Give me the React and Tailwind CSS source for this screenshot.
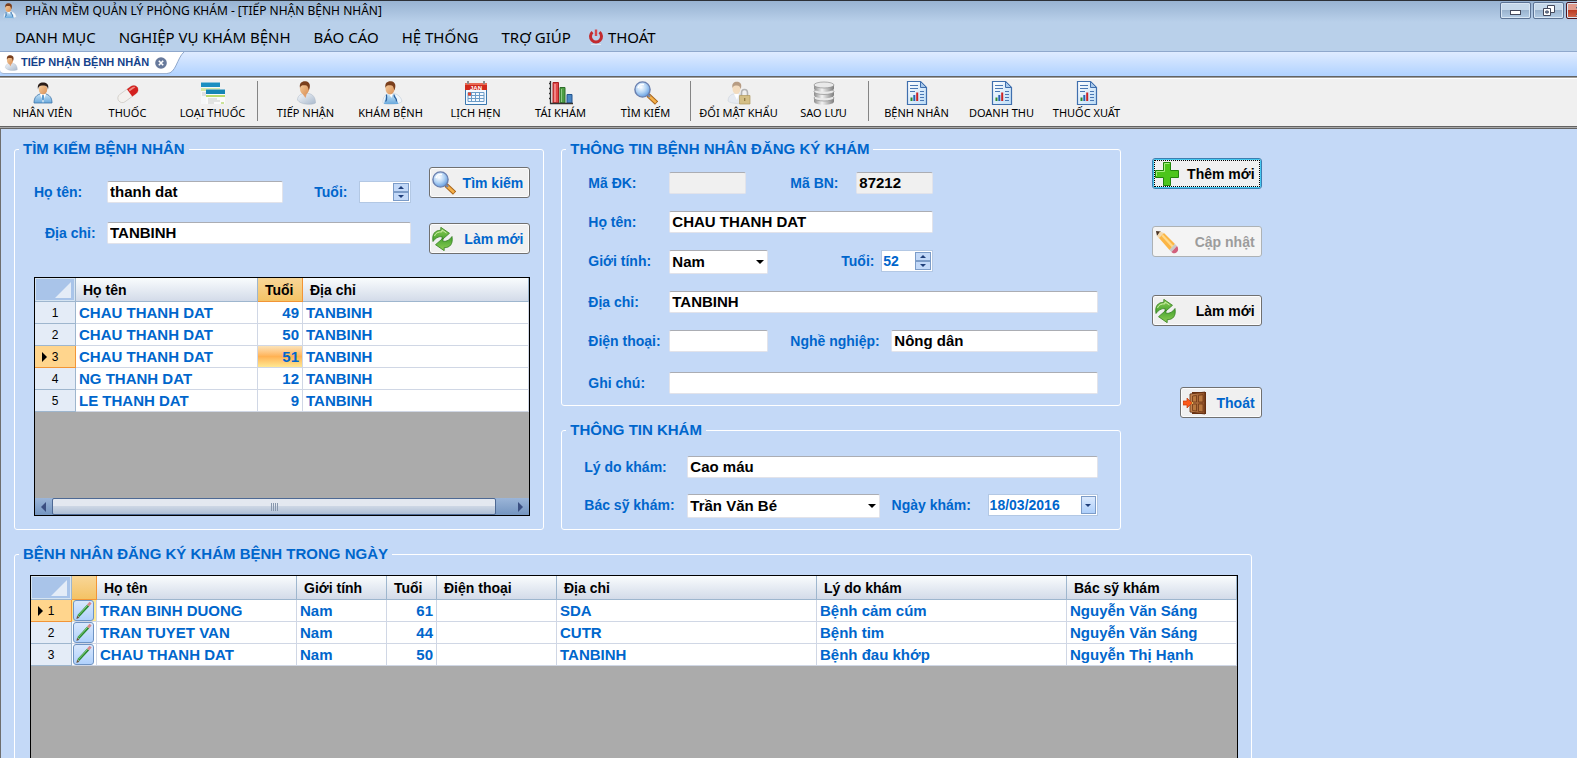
import React, { useState } from 'react'

const SEARCH_ROWS = [
    { name: 'CHAU THANH DAT', age: 49, address: 'TANBINH' },
    { name: 'CHAU THANH DAT', age: 50, address: 'TANBINH' },
    { name: 'CHAU THANH DAT', age: 51, address: 'TANBINH' },
    { name: 'NG THANH DAT', age: 12, address: 'TANBINH' },
    { name: 'LE THANH DAT', age: 9, address: 'TANBINH' },
]

const TODAY_ROWS = [
    { name: 'TRAN BINH DUONG', sex: 'Nam', age: 61, phone: '', address: 'SDA', reason: 'Bệnh cảm cúm', doctor: 'Nguyễn Văn Sáng' },
    { name: 'TRAN TUYET VAN', sex: 'Nam', age: 44, phone: '', address: 'CUTR', reason: 'Bệnh tim', doctor: 'Nguyễn Văn Sáng' },
    { name: 'CHAU THANH DAT', sex: 'Nam', age: 50, phone: '', address: 'TANBINH', reason: 'Bệnh đau khớp', doctor: 'Nguyễn Thị Hạnh' },
]

/* ---------- icons ---------- */

function Gradients() {
    return (
        <svg className="absolute w-0 h-0" aria-hidden="true">
            <defs>
                <linearGradient id="skin" x1="0" y1="0" x2="1" y2="1">
                    <stop offset="0" stopColor="#f6cfa0" /><stop offset="1" stopColor="#d98f55" />
                </linearGradient>
                <linearGradient id="coat" x1="0" y1="0" x2="1" y2="1">
                    <stop offset="0" stopColor="#f4f7fb" /><stop offset="1" stopColor="#a9b9cc" />
                </linearGradient>
                <linearGradient id="scrub" x1="0" y1="0" x2="0" y2="1">
                    <stop offset="0" stopColor="#c4e2f7" /><stop offset="1" stopColor="#6aa9dc" />
                </linearGradient>
                <radialGradient id="lens" cx="0.4" cy="0.35" r="0.7">
                    <stop offset="0" stopColor="#ffffff" /><stop offset="0.5" stopColor="#b5d5f5" /><stop offset="1" stopColor="#5b97dd" />
                </radialGradient>
                <linearGradient id="disk" x1="0" y1="0" x2="1" y2="0">
                    <stop offset="0" stopColor="#8c8c8c" /><stop offset="0.4" stopColor="#f2f2f2" /><stop offset="1" stopColor="#7d7d7d" />
                </linearGradient>
                <linearGradient id="leaf" x1="0" y1="0" x2="0" y2="1">
                    <stop offset="0" stopColor="#8fce55" /><stop offset="1" stopColor="#3f9f2c" />
                </linearGradient>
                <linearGradient id="wood" x1="0" y1="0" x2="1" y2="0">
                    <stop offset="0" stopColor="#c98a55" /><stop offset="1" stopColor="#8a4a22" />
                </linearGradient>
                <linearGradient id="page" x1="0" y1="0" x2="1" y2="1">
                    <stop offset="0" stopColor="#ffffff" /><stop offset="1" stopColor="#bcdcf6" />
                </linearGradient>
            </defs>
        </svg>
    )
}

function StaffIcon() {
    return (
        <svg viewBox="0 0 24 24" className="size-6">
            <path d="M3 22c0-6 3-8 6-9h6c3 1 6 3 6 9z" fill="url(#scrub)" stroke="#3c74a8" strokeWidth=".8" />
            <path d="M9 13h6l-3 9z" fill="#fff" />
            <path d="M11.200 14h1.600l.6 4-1.400 2-1.400-2z" fill="#5d9bcf" />
            <ellipse cx="12" cy="8.500" rx="4.200" ry="5" fill="url(#skin)" />
            <path d="M7 8.500C6 3 9 1.500 12 1.500S18.500 3 17 8.500c-.5-3-1.500-4-5-4s-4.500 1-5 4z" fill="#2a1d18" />
        </svg>
    )
}

function PatientIcon({ className = 'size-6' }) {
    return (
        <svg viewBox="0 0 24 24" className={className}>
            <path d="M3.500 19c0-4 3-6 6-6.500h5c4 .5 7 3.500 7 9.500-3 2-15 2-18-3z" fill="url(#coat)" stroke="#a8b4c4" strokeWidth=".5" />
            <path d="M8 12h5l-1.500 5z" fill="#e0a070" />
            <ellipse cx="10.500" cy="7.500" rx="4.600" ry="6" fill="url(#skin)" />
            <path d="M6 7C5 2 8 0 11.500.3 16 .8 17 5 14.800 9.500c-.6-2.500-.8-4-2.300-5C10 4.500 7 3.500 6 7z" fill="#7a3f1d" />
        </svg>
    )
}

function DoctorIcon({ className = 'size-6' }) {
    return (
        <svg viewBox="0 0 24 24" className={className}>
            <path d="M4 22c-.5-5 2-8.500 6-9.500h4c5 .5 8 3.500 9 8-3 3-15 4-19 1.500z" fill="#f2f6fa" stroke="#b5c3d2" strokeWidth=".5" />
            <path d="M7 13.500h9l3.500 9.500H5z" fill="url(#scrub)" />
            <path d="M7.500 13.500c0 4 1 5-1 7M15 13.500c0 4 3 3 2.500 7" fill="none" stroke="#2a5f9c" strokeWidth="1.200" />
            <path d="M10 13h3.500l-1 4z" fill="#fff" />
            <ellipse cx="11" cy="7.500" rx="4.500" ry="6" fill="url(#skin)" />
            <path d="M6.500 7C5.500 2 8.500 0 12 .3c4.500.5 5.500 4.700 3.300 9.200-.6-2.500-.8-4-2.300-5C10.500 4.500 7.500 3.500 6.500 7z" fill="#7a3f1d" />
        </svg>
    )
}

function PillIcon() {
    return (
        <svg viewBox="0 0 24 24" className="size-6">
            <g transform="rotate(-36 12 13)">
                <rect x="0.500" y="8.500" width="23" height="9" rx="4.500" fill="#f3f1ee" stroke="#c5c1bb" strokeWidth=".6" />
                <path d="M14 8.500h5a4.500 4.500 0 0 1 0 9h-5z" fill="#d3201f" />
                <path d="M15 10h4c1.500 0 2.500.8 3 1.800h-7z" fill="#f08a80" />
            </g>
        </svg>
    )
}

function DrugTypeIcon() {
    return (
        <svg viewBox="0 0 24 24" className="size-6">
            <path d="M0 1h19v22H0z" fill="#f5f7f8" />
            <path d="M0 1.500h19V6H0z" fill="#1b8fc1" />
            <path d="M0 7h19v3H0z" fill="#d6e8a6" />
            <path d="M1 12h4M1 14h4" stroke="#c8c8c8" />
            <path d="M5 8.500h19V23H5z" fill="#fafafa" />
            <path d="M5 8.500h19V13H5z" fill="#1585b5" />
            <path d="M5 14h19v2H5z" fill="#b9da6d" />
            <path d="M7 18h9M7 20h12M7 22h6" stroke="#c9ccc9" />
            <path d="M20 22h3" stroke="#9ccc3c" />
        </svg>
    )
}

function CalendarIcon() {
    return (
        <svg viewBox="0 0 24 24" className="size-6">
            <path d="M1.500 5.500h21v18h-21z" fill="#f4f9ff" stroke="#3976ad" />
            <path d="M1 2h22v7H1z" fill="#d02a1c" />
            <path d="M1 2h22v2H1z" fill="#e86a55" />
            <path d="M4 0v3M20 0v3" stroke="#8c8c8c" strokeWidth="2" />
            <text x="12" y="8.500" textAnchor="middle" fontSize="6" fontWeight="bold" fontFamily="Liberation Sans" fill="#fff">JAN</text>
            <path d="M4 11.500h16v9H4zM4 14.500h16M4 17.500h16M7.500 11.500v9M11.500 11.500v9M15.500 11.500v9" fill="none" stroke="#6d9dc8" />
            <path d="M4 11.500h3v3H4z" fill="#e8452c" />
        </svg>
    )
}

function ChartIcon() {
    return (
        <svg viewBox="0 0 24 24" className="size-6">
            <path d="M4 1.500h5.500V22H4z" fill="#e04848" stroke="#a82020" />
            <path d="M6 3v18" stroke="#f79a9a" strokeWidth="1.500" />
            <path d="M11 6.500h5V22h-5z" fill="#4f9e45" stroke="#2c6e28" />
            <path d="M12.500 8v13" stroke="#90cc88" />
            <path d="M18 13.500h5V22h-5z" fill="#4a86c4" stroke="#22558f" />
            <path d="M1.500 0v22.500H24M0 2.500h2M0 7.500h2M0 12.500h2M0 17.500h2" fill="none" stroke="#333" strokeWidth="1.300" />
        </svg>
    )
}

function SearchIcon() {
    return (
        <svg viewBox="0 0 24 24" className="size-6 shrink-0">
            <path d="m14 14 8.500 8" stroke="#a8641a" strokeWidth="4.500" />
            <path d="m15 15 7 6.500" stroke="#f5b14a" strokeWidth="2.500" />
            <path d="m13 13 3 2.800" stroke="#7b87a0" strokeWidth="2.500" />
            <circle cx="8.500" cy="8.500" r="7.600" fill="url(#lens)" stroke="#6a7fae" strokeWidth="1.400" />
            <path d="M4 7c.5-2.500 3-4 6-3.500" fill="none" stroke="#fff" strokeWidth="1.500" />
        </svg>
    )
}

function PasswordIcon() {
    return (
        <svg viewBox="0 0 24 24" className="size-6">
            <path d="M1 20c0-4 2-6 5-7h6c4 1 6 4 6 8-3 2-14 2-17-1z" fill="#e6eaf1" stroke="#c5ccd6" strokeWidth=".5" />
            <path d="M7 13h5l-2 6z" fill="#fff" />
            <ellipse cx="9.500" cy="7.500" rx="4" ry="5.500" fill="#f3dcbf" />
            <path d="M5.500 7C4.500 2.500 7 .8 10 .8s5.500 2 3.700 7.200C13 5.500 12 4.500 10 4.500S6.500 4.500 5.500 7z" fill="#b79c83" />
            <path d="M14.500 15v-3a3 3.500 0 0 1 6 0v3" fill="none" stroke="#b3b3b3" strokeWidth="1.600" />
            <path d="M12.500 14.500h10.500v8.500H12.500z" fill="#d4bf86" stroke="#b09a60" strokeWidth=".7" />
            <path d="M17.700 17v3" stroke="#8f7a45" strokeWidth="1.300" />
        </svg>
    )
}

function DatabaseIcon() {
    return (
        <svg viewBox="0 0 24 24" className="size-6">
            {[16, 9.500, 3].map(y => (
                <g key={y}>
                    <path d={`M2 ${y + 1}v3.500c0 2 4 3.200 10 3.200s10-1.200 10-3.200V${y + 1}z`} fill="url(#disk)" />
                    <ellipse cx="12" cy={y + 1} rx="10" ry="3" fill="#e9e9e9" stroke="#8e8e8e" strokeWidth=".7" />
                </g>
            ))}
        </svg>
    )
}

function ReportIcon() {
    return (
        <svg viewBox="0 0 24 24" className="size-6">
            <path d="M2.500.5h13l6 6v17h-19z" fill="url(#page)" stroke="#3f6fae" strokeWidth="1.200" />
            <path d="M15.500.5v6h6z" fill="#a9c9ea" stroke="#3f6fae" />
            <path d="M5 4.500h8M5 7.500h8M5 10.500h5M15 10.500h4M15 13.500h4M15 16.500h4M15 19.500h4" stroke="#4a78b4" />
            <path d="M6.500 16.500V20" stroke="#2f8a2f" strokeWidth="2" />
            <path d="M9.300 14v6" stroke="#2a62b4" strokeWidth="2" />
            <path d="M12.200 11.500V20" stroke="#cc2424" strokeWidth="2" />
        </svg>
    )
}

function RefreshIcon() {
    const arrow = 'M1 14.500C-.3 7 3 3.300 8.800 3.300V.3L17.500 6.300 10 12.800V9.600C6 9.400 3.500 11 1 14.500z'
    return (
        <svg viewBox="0 0 24 24" className="size-6 shrink-0">
            <g fill="url(#leaf)" stroke="#357f22" strokeWidth=".8" strokeLinejoin="round">
                <path d={arrow} />
                <path d={arrow} transform="rotate(180 10.500 12)" />
            </g>
            <path d="M2.500 9C3.500 6 6 4.800 10 4.800V3l4.500 3" fill="none" stroke="#cdecaa" />
        </svg>
    )
}

function PlusIcon() {
    return (
        <svg viewBox="0 0 24 24" className="size-6">
            <path d="M8.500.5h7v8h8v7h-8v8h-7v-8h-8v-7h8z" fill="#4cc51b" stroke="#20860b" />
            <path d="M9.500 9.500v-8h5M1.500 14V9.500h8" fill="none" stroke="#a6ee80" />
        </svg>
    )
}

function PencilIcon() {
    return (
        <svg viewBox="0 0 24 24" className="size-6">
            <path d="M1 1l5 .5L2 6z" fill="#4a3526" />
            <path d="M5 1.500 2 6l2 2.500L9 3z" fill="#f3d9ae" />
            <path d="M9 3 4 8l10.500 12L20 14z" fill="#fbb545" />
            <path d="M8 4.500 6.500 6 17 17.500l1.500-1.800z" fill="#ffd98a" />
            <path d="m20 14-5.500 6 2 2L22 16z" fill="#c9c9c9" />
            <path d="M22 16l-5.500 6c1.500 2 4 1.500 5.500 0s1.500-4 0-6z" fill="#d2607c" />
        </svg>
    )
}

function DoorIcon() {
    return (
        <svg viewBox="0 0 24 24" className="size-6">
            <path d="M9 1h14v22H9z" fill="#6b3212" />
            <path d="M7 3l15-2v22L7 21z" fill="url(#wood)" stroke="#5b2b10" strokeWidth=".8" />
            <path d="M9.500 5l4-.5v6.500h-4zM15.500 4.300l4.500-.6V11h-4.500zM9.500 13h4v7l-4-.5zM15.500 13H20v8l-4.500-.6z" fill="#b9783f" stroke="#6e3816" strokeWidth=".8" />
            <circle cx="9" cy="12" r="1" fill="#f3d35a" />
            <path d="M0 10h4V7l5 5-5 5v-3H0z" fill="#fb5a1c" stroke="#c43a08" strokeWidth=".7" />
        </svg>
    )
}

function PowerIcon() {
    return (
        <svg viewBox="0 0 16 16" className="size-4">
            <path d="M4.500 3.200a5.500 5.500 0 1 0 7 0" fill="none" stroke="#c22a2e" strokeWidth="3" />
            <path d="M8 .5v6.500" stroke="#d4484c" strokeWidth="2.400" />
            <path d="M3 15.500h10" stroke="#dfe8f2" />
        </svg>
    )
}

function PenIcon() {
    return (
        <svg viewBox="0 0 20 20" className="size-5">
            <path d="M4.500 15.500 15 4" stroke="#2a8a30" strokeWidth="2.800" />
            <path d="m4.500 14.800 10-11" stroke="#8cd486" />
            <path d="m14.800 4.200 2.700-3" stroke="#d98a8a" strokeWidth="2.800" />
            <path d="M2.500 18.500l.8-3.600 2.400 2.200z" fill="#6b5636" />
        </svg>
    )
}

function Triangle({ dir = 'down', className = '' }) {
    const points = { down: '0,0 8,0 4,4', up: '0,4 8,4 4,0', left: '4,0 4,8 0,4', right: '0,0 0,8 4,4' }
    const box = dir === 'down' || dir === 'up' ? '0 0 8 4' : '0 0 4 8'
    return (
        <svg viewBox={box} className={className} aria-hidden="true">
            <polygon points={points[dir]} fill="currentColor" />
        </svg>
    )
}

/* ---------- form controls ---------- */

function Group({ title, className = '', bodyClass = '', children }) {
    return (
        <fieldset className={`flex min-w-0 flex-col border border-white rounded-[3px] px-1 ${className}`}>
            <legend className="px-1 text-[15px] leading-[18px] font-bold text-[#0066cc]">{title}</legend>
            <div className={`flex flex-1 flex-col ${bodyClass}`}>{children}</div>
        </fieldset>
    )
}

function Label({ className = '', ...props }) {
    return <label {...props} className={`shrink-0 whitespace-nowrap text-sm leading-[22px] font-bold text-[#0066cc] ${className}`} />
}

function TextInput({ className = '', ...props }) {
    return (
        <input
            type="text"
            {...props}
            className={`h-[22px] min-w-0 rounded-[2px] border border-[#e2e3ea] border-t-[#abadb3] px-0.5 text-[15px] font-bold text-black focus:outline-none ${className}`}
        />
    )
}

function Select({ id, options, className = '' }) {
    return (
        <div className={`relative ${className}`}>
            <select id={id} className="block w-full h-6 appearance-none rounded-[2px] border border-[#e2e3ea] border-t-[#abadb3] bg-white pl-0.5 pr-5 text-[15px] leading-5 font-bold text-black focus:outline-none">
                {options.map(o => <option key={o}>{o}</option>)}
            </select>
            <Triangle className="pointer-events-none absolute right-1 top-2.5 w-2 h-1 text-black" />
        </div>
    )
}

function Spinner({ id, initial = '' }) {
    const [value, setValue] = useState(initial)
    const step = n => setValue(v => String(Math.max(0, Number(v) + n)))
    return (
        <div className="flex w-[52px] h-[22px] shrink-0 border border-[#b3c8e4] bg-white p-px">
            <input id={id} value={value} onChange={e => setValue(e.target.value)} className="w-0 flex-1 text-sm leading-4 font-bold text-[#0066cc] focus:outline-none" />
            <div className="flex w-4 flex-col">
                <button type="button" aria-label="Tăng" onClick={() => step(1)} className="flex flex-1 items-center justify-center border border-[#7c9cc8] bg-[#c3d9f8] text-[#1f3f7a]">
                    <Triangle dir="up" className="w-1.5 h-[3px]" />
                </button>
                <button type="button" aria-label="Giảm" onClick={() => step(-1)} className="flex flex-1 items-center justify-center border border-[#7c9cc8] bg-[#c3d9f8] text-[#1f3f7a]">
                    <Triangle className="w-1.5 h-[3px]" />
                </button>
            </div>
        </div>
    )
}

function PushButton({ icon: Icon, label, disabled, focused, className = '' }) {
    const frame = disabled
        ? 'border-[#adb2b5] bg-[#f4f4f4] text-[#9c9c9c]'
        : focused
            ? 'border-[#3c7fb1] bg-[#f0f0f0] shadow-[inset_0_0_0_1px_#45c8f0]'
            : 'border-[#707070] bg-[#f0f0f0] shadow-[inset_0_0_0_1px_#fcfcfc]'
    return (
        <button type="button" disabled={disabled} className={`h-[31px] rounded-[3px] border p-px text-sm font-bold ${frame} ${className}`}>
            <span className={`flex h-full items-center justify-between border pr-1 ${focused ? 'border-dotted border-black' : 'border-transparent'}`}>
                <Icon />
                <span className="whitespace-nowrap">{label}</span>
            </span>
        </button>
    )
}

/* ---------- data grids ---------- */

function HeadCell({ active, className = '', children }) {
    const look = active
        ? 'border-[#f29536] bg-linear-to-b from-[#f8d697] to-[#f4c364]'
        : 'border-[#9eb6ce] bg-linear-to-b from-[#f9fcfd] to-[#d3dbe9]'
    return <th className={`h-6 border-r border-b px-[7px] text-left text-sm font-bold text-black whitespace-nowrap ${look} ${className}`}>{children}</th>
}

function Corner() {
    return (
        <th aria-label="Chọn tất cả" className="h-6 border-r border-b border-[#9eb6ce] bg-[#a9c4e9] p-0 shadow-[inset_0_0_0_1px_#d5e4f2]">
            <svg viewBox="0 0 16 16" className="ml-auto mr-1 size-4"><path d="M16 0v16H0z" fill="#e4ecf7" /></svg>
        </th>
    )
}

function RowHead({ number, current }) {
    return (
        <th className={`h-[22px] border-r border-b p-0 font-normal text-xs text-black ${current ? 'border-[#f29536] bg-[#ffd58d]' : 'border-[#9eb6ce] bg-[#e4ecf7]'}`}>
            <span className="flex items-center">
                <span className="flex w-4 justify-end">{current && <Triangle dir="right" className="w-[5px] h-2.5 mr-1" />}</span>
                <span className="w-2 text-center">{number}</span>
            </span>
        </th>
    )
}

function Cell({ className = 'bg-white', children }) {
    return <td className={`h-[22px] border-r border-b border-[#d0d7e5] px-[3px] py-0 leading-5 whitespace-nowrap ${className}`}>{children}</td>
}

function SearchGrid() {
    return (
        <div className="flex flex-1 flex-col mt-[23px] border border-black bg-[#ababab]">
            <table className="w-full table-fixed border-separate border-spacing-0 text-[15px] font-bold text-[#0066cc]">
                <colgroup>
                    <col className="w-[41px]" /><col className="w-[182px]" /><col className="w-[45px]" /><col />
                </colgroup>
                <thead>
                    <tr>
                        <Corner />
                        <HeadCell>Họ tên</HeadCell>
                        <HeadCell active>Tuổi</HeadCell>
                        <HeadCell>Địa chỉ</HeadCell>
                    </tr>
                </thead>
                <tbody>
                    {SEARCH_ROWS.map((row, i) => (
                        <tr key={i}>
                            <RowHead number={i + 1} current={i === 2} />
                            <Cell>{row.name}</Cell>
                            <Cell className={i === 2 ? 'text-right bg-linear-to-b from-[#fbe3b8] via-[#ffb253] to-[#ffe892]' : 'text-right bg-white'}>{row.age}</Cell>
                            <Cell>{row.address}</Cell>
                        </tr>
                    ))}
                </tbody>
            </table>
            <div className="mt-auto flex h-[17px] items-stretch bg-linear-to-b from-[#9bb5d8] to-[#7495c0] text-[#3b4f81]">
                <button type="button" aria-label="Cuộn trái" className="flex w-[17px] items-center justify-center"><Triangle dir="left" className="w-[5px] h-2.5" /></button>
                <div className="flex flex-1 items-center justify-center gap-px rounded-[2px] border border-[#4d6994] bg-linear-to-b from-[#e3e8f0] from-45% via-[#ccd6e4] via-50% to-[#aebfd6]">
                    <span className="w-px h-2 bg-[#8797ad]" /><span className="w-px h-2 bg-[#8797ad]" /><span className="w-px h-2 bg-[#8797ad]" /><span className="w-px h-2 bg-[#8797ad]" />
                </div>
                <button type="button" aria-label="Cuộn phải" className="ml-4 flex w-[17px] items-center justify-center"><Triangle dir="right" className="w-[5px] h-2.5" /></button>
            </div>
        </div>
    )
}

function TodayGrid() {
    return (
        <div className="min-h-[300px] border border-black bg-[#ababab]">
            <table className="w-full table-fixed border-separate border-spacing-0 text-[15px] font-bold text-[#0066cc]">
                <colgroup>
                    <col className="w-[41px]" /><col className="w-[25px]" /><col className="w-[200px]" /><col className="w-[90px]" /><col className="w-[50px]" />
                    <col className="w-[120px]" /><col className="w-[260px]" /><col className="w-[250px]" /><col />
                </colgroup>
                <thead>
                    <tr>
                        <Corner />
                        <HeadCell active />
                        <HeadCell>Họ tên</HeadCell>
                        <HeadCell>Giới tính</HeadCell>
                        <HeadCell>Tuổi</HeadCell>
                        <HeadCell>Điện thoại</HeadCell>
                        <HeadCell>Địa chỉ</HeadCell>
                        <HeadCell>Lý do khám</HeadCell>
                        <HeadCell>Bác sỹ khám</HeadCell>
                    </tr>
                </thead>
                <tbody>
                    {TODAY_ROWS.map((row, i) => (
                        <tr key={i}>
                            <RowHead number={i + 1} current={i === 0} />
                            <td className={`h-[22px] border-r border-b border-[#d0d7e5] p-0 ${i === 0 ? 'bg-[#ffe892]' : 'bg-white'}`}>
                                <button type="button" aria-label={`Sửa ${row.name}`} className="ml-px flex size-[21px] items-center justify-center rounded-[3px] border border-[#6f94c4] bg-linear-to-b from-[#d9e8fd] to-[#b0d1fc]">
                                    <PenIcon />
                                </button>
                            </td>
                            <Cell>{row.name}</Cell>
                            <Cell>{row.sex}</Cell>
                            <Cell className="text-right bg-white">{row.age}</Cell>
                            <Cell>{row.phone}</Cell>
                            <Cell>{row.address}</Cell>
                            <Cell>{row.reason}</Cell>
                            <Cell>{row.doctor}</Cell>
                        </tr>
                    ))}
                </tbody>
            </table>
        </div>
    )
}

/* ---------- window chrome ---------- */

function TitleBar() {
    const box = 'flex h-[17px] w-[31px] shrink-0 items-center justify-center rounded-[2px] border shadow-[inset_0_0_0_1px_#d8e6f4]'
    return (
        <header className="flex h-[22px] shrink-0 items-start border-t border-[#2c3036] bg-linear-to-b from-[#98b3d2] to-[#b9d0ea] pl-px">
            <DoctorIcon className="size-4 shrink-0 mt-0.5" />
            <h1 className="ml-2 flex-1 whitespace-nowrap text-xs leading-5 text-black">PHẦN MỀM QUẢN LÝ PHÒNG KHÁM - [TIẾP NHẬN BỆNH NHÂN]</h1>
            <div className="flex gap-0.5 mt-px w-[77px] overflow-hidden">
                <button type="button" aria-label="Thu nhỏ" className={`${box} border-[#5c7394] bg-linear-to-b from-[#c5d8ea] from-45% via-[#9ab3ce] via-50% to-[#b4cde6]`}>
                    <svg viewBox="0 0 12 6" className="w-3 h-1.5 mt-1"><rect x=".5" y=".5" width="10" height="4" fill="#fff" stroke="#44495c" /></svg>
                </button>
                <button type="button" aria-label="Khôi phục" className={`${box} border-[#5c7394] bg-linear-to-b from-[#c5d8ea] from-45% via-[#9ab3ce] via-50% to-[#b4cde6]`}>
                    <svg viewBox="0 0 12 12" className="size-3">
                        <path d="M4.500.5h7v7h-7z" fill="#fff" stroke="#44495c" /><path d="M.5 3.500h7v7h-7z" fill="#fff" stroke="#44495c" /><path d="M2.800 6h2.400v2H2.800z" fill="#8fb0d4" stroke="#44495c" />
                    </svg>
                </button>
                <button type="button" aria-label="Đóng" className={`${box} border-[#4d1520] bg-linear-to-b from-[#e09a8c] from-45% via-[#bb3a22] via-50% to-[#cf6a50]`}>
                    <svg viewBox="0 0 12 12" className="size-3"><path d="m1 1 10 10M11 1 1 11" stroke="#44495c" strokeWidth="4" /><path d="m1 1 10 10M11 1 1 11" stroke="#fff" strokeWidth="2" /></svg>
                </button>
            </div>
        </header>
    )
}

function MenuBar() {
    return (
        <nav className="flex h-[29px] shrink-0 items-center gap-[23px] bg-[#b9d0ea] pl-[15px] text-[15px] leading-6 whitespace-nowrap text-black">
            {['DANH MỤC', 'NGHIỆP VỤ KHÁM BỆNH', 'BÁO CÁO', 'HỆ THỐNG', 'TRỢ GIÚP'].map(item => (
                <button key={item} type="button">{item}</button>
            ))}
            <button type="button" className="-ml-1.5 flex items-center gap-1"><PowerIcon />THOÁT</button>
        </nav>
    )
}

function TabStrip() {
    return (
        <div className="flex h-[25px] shrink-0 items-start border-t border-[#8fa8cc] bg-linear-to-b from-[#dfebff] to-[#b0d2ff]">
            <div className="flex h-[22px] items-center rounded-bl border-b border-[#9fb4d2] bg-white pl-[3px]">
                <PatientIcon className="size-4" />
                <span className="ml-0.5 whitespace-nowrap font-['Liberation_Sans'] text-[11px] font-bold text-[#15428b]">TIẾP NHẬN BỆNH NHÂN</span>
                <button type="button" aria-label="Đóng thẻ" className="ml-1.5">
                    <svg viewBox="0 0 12 12" className="size-3"><circle cx="6" cy="6" r="5.800" fill="#67799b" /><path d="m3.800 3.800 4.400 4.400M8.200 3.800 3.800 8.200" stroke="#fff" strokeWidth="1.600" /></svg>
                </button>
            </div>
            <svg viewBox="0 0 20 22" className="h-[22px] w-5" aria-hidden="true">
                <path d="M0 0h17C10 6 9 21.500 0 21.500z" fill="#fff" />
                <path d="M17 0C10 6 9 21.500 0 21.500" fill="none" stroke="#8fa8cc" />
            </svg>
        </div>
    )
}

function ToolItem({ icon: Icon, label }) {
    return (
        <button type="button" className="flex w-[85px] flex-col items-center">
            <Icon />
            <span className="whitespace-nowrap text-[11px] leading-4 text-black">{label}</span>
        </button>
    )
}

function ToolSeparator() {
    return <div className="ml-0.5 mr-[5px] w-px h-10 bg-[#858585]" />
}

function ToolBar() {
    return (
        <div className="shrink-0 border-t border-[#636363] bg-[#a09f9b] pt-px">
            <div role="toolbar" className="flex h-12 items-start border-t border-white bg-[#f0f0f0] pt-0.5">
                <ToolItem icon={StaffIcon} label="NHÂN VIÊN" />
                <ToolItem icon={PillIcon} label="THUỐC" />
                <ToolItem icon={DrugTypeIcon} label="LOẠI THUỐC" />
                <ToolSeparator />
                <ToolItem icon={PatientIcon} label="TIẾP NHẬN" />
                <ToolItem icon={DoctorIcon} label="KHÁM BỆNH" />
                <ToolItem icon={CalendarIcon} label="LỊCH HẸN" />
                <ToolItem icon={ChartIcon} label="TÁI KHÁM" />
                <ToolItem icon={SearchIcon} label="TÌM KIẾM" />
                <ToolSeparator />
                <ToolItem icon={PasswordIcon} label="ĐỔI MẬT KHẨU" />
                <ToolItem icon={DatabaseIcon} label="SAO LƯU" />
                <ToolSeparator />
                <ToolItem icon={ReportIcon} label="BỆNH NHÂN" />
                <ToolItem icon={ReportIcon} label="DOANH THU" />
                <ToolItem icon={ReportIcon} label="THUỐC XUẤT" />
            </div>
            <div className="h-[3px] border-y border-[#636363] bg-[#a9a9a9]" />
        </div>
    )
}

/* ---------- panels ---------- */

function SearchPanel() {
    return (
        <Group title="TÌM KIẾM BỆNH NHÂN" className="flex-1" bodyClass="pl-[15px] pr-[9px] pb-[13px]">
            <div className="flex gap-[18px]">
                <div className="flex min-w-0 flex-1 flex-col gap-[19px] pt-[23px]">
                    <div className="flex">
                        <Label htmlFor="s-name" className="w-[73px]">Họ tên:</Label>
                        <TextInput id="s-name" defaultValue="thanh dat" className="flex-1 bg-white" />
                        <Label htmlFor="s-age" className="w-[76px] pl-[31px]">Tuổi:</Label>
                        <Spinner id="s-age" />
                    </div>
                    <div className="flex">
                        <Label htmlFor="s-address" className="w-[73px] pl-[11px]">Địa chỉ:</Label>
                        <TextInput id="s-address" defaultValue="TANBINH" className="flex-1 bg-white" />
                    </div>
                </div>
                <div className="flex w-[101px] shrink-0 flex-col gap-[25px] pt-[9px] text-[#0066cc]">
                    <PushButton icon={SearchIcon} label="Tìm kiếm" />
                    <PushButton icon={RefreshIcon} label="Làm mới" />
                </div>
            </div>
            <SearchGrid />
        </Group>
    )
}

function PatientPanel() {
    return (
        <Group title="THÔNG TIN BỆNH NHÂN ĐĂNG KÝ KHÁM" bodyClass="gap-[17px] pl-[22px] pr-[18px] pt-3.5 pb-[11px]">
            <div className="flex">
                <Label htmlFor="p-reg" className="w-[81px]">Mã ĐK:</Label>
                <TextInput id="p-reg" readOnly className="w-[77px] bg-[#f0f0f0]" />
                <Label htmlFor="p-code" className="ml-11 w-[66px]">Mã BN:</Label>
                <TextInput id="p-code" readOnly defaultValue="87212" className="w-[77px] bg-[#f0f0f0]" />
            </div>
            <div className="flex">
                <Label htmlFor="p-name" className="w-[81px]">Họ tên:</Label>
                <TextInput id="p-name" defaultValue="CHAU THANH DAT" className="w-[264px] bg-white" />
            </div>
            <div className="flex">
                <Label htmlFor="p-sex" className="w-[81px]">Giới tính:</Label>
                <Select id="p-sex" options={['Nam', 'Nữ']} className="w-[99px]" />
                <Label htmlFor="p-age" className="ml-[73px] w-10">Tuổi:</Label>
                <Spinner id="p-age" initial="52" />
            </div>
            <div className="flex">
                <Label htmlFor="p-address" className="w-[81px]">Địa chỉ:</Label>
                <TextInput id="p-address" defaultValue="TANBINH" className="flex-1 bg-white" />
            </div>
            <div className="flex">
                <Label htmlFor="p-phone" className="w-[81px]">Điện thoại:</Label>
                <TextInput id="p-phone" className="w-[99px] bg-white" />
                <Label htmlFor="p-job" className="ml-[22px] w-[101px]">Nghề nghiệp:</Label>
                <TextInput id="p-job" defaultValue="Nông dân" className="flex-1 bg-white" />
            </div>
            <div className="flex pt-[3px]">
                <Label htmlFor="p-note" className="w-[81px]">Ghi chú:</Label>
                <TextInput id="p-note" className="flex-1 bg-white" />
            </div>
        </Group>
    )
}

function VisitPanel() {
    return (
        <Group title="THÔNG TIN KHÁM" bodyClass="gap-4 px-[18px] pt-[17px] pb-[11px]">
            <div className="flex">
                <Label htmlFor="v-reason" className="w-[103px]">Lý do khám:</Label>
                <TextInput id="v-reason" defaultValue="Cao máu" className="flex-1 bg-white" />
            </div>
            <div className="flex">
                <Label htmlFor="v-doctor" className="w-[103px]">Bác sỹ khám:</Label>
                <Select id="v-doctor" options={['Trần Văn Bé', 'Nguyễn Văn Sáng', 'Nguyễn Thị Hạnh']} className="flex-1" />
                <Label htmlFor="v-date" className="w-[108px] pl-3">Ngày khám:</Label>
                <div className="flex h-[22px] w-[110px] border border-[#b3c8e4] bg-white p-px">
                    <input id="v-date" defaultValue="18/03/2016" className="w-0 flex-1 text-sm leading-4 font-bold text-[#0066cc] focus:outline-none" />
                    <button type="button" aria-label="Chọn ngày" className="flex w-[15px] items-center justify-center border border-[#7c9cc8] bg-linear-to-b from-[#dbe9fd] to-[#aecffa] text-[#1f3f7a]">
                        <Triangle className="w-1.5 h-[3px]" />
                    </button>
                </div>
            </div>
        </Group>
    )
}

export default function App() {
    return (
        <div className="flex h-screen flex-col overflow-hidden bg-[#c4d9f7] font-['Noto_Sans',sans-serif]">
            <Gradients />
            <TitleBar />
            <MenuBar />
            <TabStrip />
            <ToolBar />
            <main className="flex-1 border-l border-[#6e6e6e] pl-[13px] pr-[20%] pt-[11px] font-['Liberation_Sans',sans-serif]">
                <div className="flex">
                    <div className="flex min-w-0 flex-[530]">
                        <SearchPanel />
                    </div>
                    <div className="ml-[17px] flex min-w-0 flex-[559] flex-col gap-[15px]">
                        <PatientPanel />
                        <VisitPanel />
                    </div>
                    <div className="ml-[31px] flex w-[110px] shrink-0 flex-col items-end pt-[18px] text-black">
                        <PushButton icon={PlusIcon} label="Thêm mới" focused className="w-full" />
                        <PushButton icon={PencilIcon} label="Cập nhật" disabled className="mt-[37px] w-full" />
                        <PushButton icon={RefreshIcon} label="Làm mới" className="mt-[38px] w-full" />
                        <PushButton icon={DoorIcon} label="Thoát" className="mt-[61px] w-[82px] text-[#0066cc]" />
                    </div>
                </div>
                <Group title="BỆNH NHÂN ĐĂNG KÝ KHÁM BỆNH TRONG NGÀY" className="mt-[15px] mr-2.5" bodyClass="pl-[11px] pr-[9px] pt-3 pb-3.5">
                    <TodayGrid />
                </Group>
            </main>
        </div>
    )
}
